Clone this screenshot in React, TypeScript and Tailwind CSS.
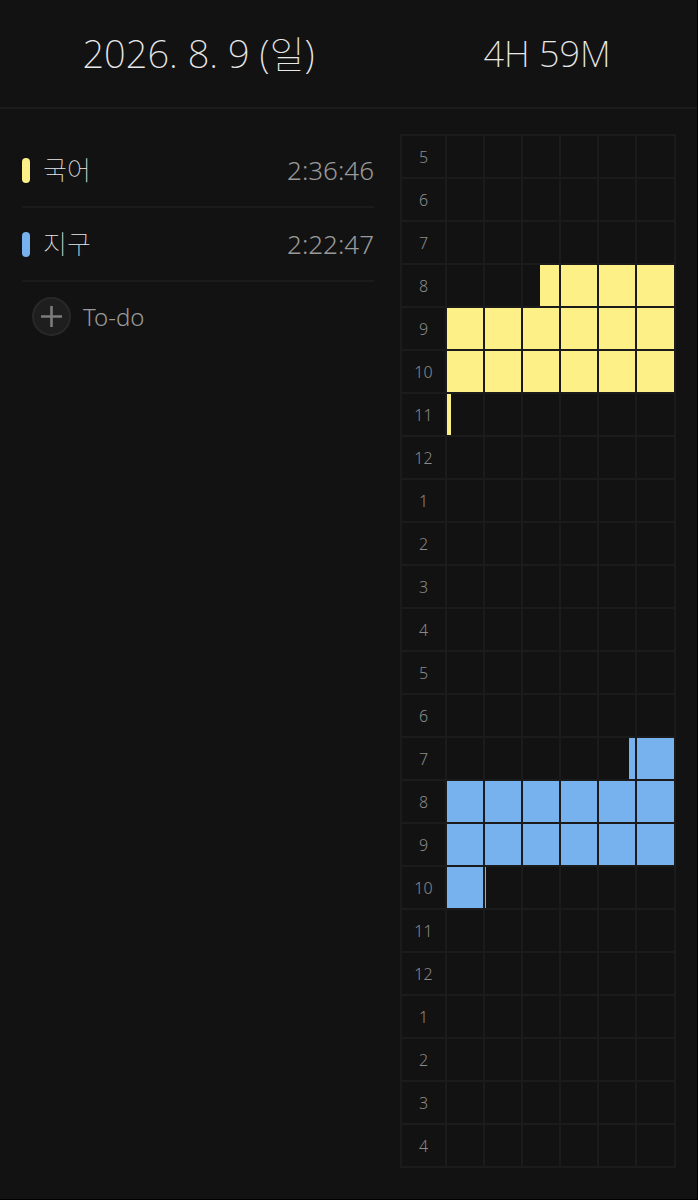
import React from "react";

type Subject = {
    name: string;
    time: string;
    color: string;
    // Minutes counted from the top of the grid (5:00)
    start: number;
    end: number;
};

const subjects: Subject[] = [
    {
        name: "국어",
        time: "2:36:46",
        color: "bg-[#fdf087]",
        start: 3 * 60 + 24.6,
        end: 6 * 60 + 1.1
    },
    {
        name: "지구",
        time: "2:22:47",
        color: "bg-[#78b2ee]",
        start: 14 * 60 + 48.4,
        end: 17 * 60 + 10.4
    }
];

const hours = Array.from({ length: 24 }, (_x, i) => ((i + 4) % 12) + 1);
const tens = [0, 10, 20, 30, 40, 50];

const Cell = ({ from }: { from: number }) => {
    const subject = subjects.find((s) => s.start < from + 10 && s.end > from);
    if (!subject) return <td className="bg-[#121212] p-0" />;

    const start = Math.max(subject.start, from) - from;
    const end = Math.min(subject.end, from + 10) - from;

    return (
        <td className="bg-[#121212] p-0">
            <div
                className={`h-[41px] ${subject.color}`}
                style={{
                    marginLeft: `${start * 10}%`,
                    width: `${(end - start) * 10}%`
                }}
            />
        </td>
    );
};

const TimeTable = () => (
    <table
        className="w-[276px] shrink-0 table-fixed border-separate border-spacing-[2px] bg-[#1b1b1b]"
        aria-label="Time table"
    >
        <colgroup>
            <col className="w-[43px]" />
            <col className="w-[36px]" />
            <col className="w-[36px]" />
            <col className="w-[36px]" />
            <col className="w-[36px]" />
            <col className="w-[36px]" />
            <col />
        </colgroup>
        <tbody>
            {hours.map((hour, row) => (
                <tr key={row} className="h-[41px]">
                    <th
                        scope="row"
                        className="bg-[#121212] p-0 text-center text-base font-light text-[#8a8a8a]"
                    >
                        {hour}
                    </th>
                    {tens.map((t) => (
                        <Cell key={t} from={row * 60 + t} />
                    ))}
                </tr>
            ))}
        </tbody>
    </table>
);

export default function App() {
    return (
        <div className="min-h-screen border-r border-b border-black bg-[#121212] font-['Noto_Sans','Noto_Sans_CJK_KR',sans-serif] text-[#e8e8e8] antialiased">
            <header className="flex h-[109px] items-center border-b-2 border-[#1b1b1b] font-extralight">
                <h1 className="flex-1 text-center text-[38px]">
                    2026. 8. 9 (<span className="font-thin">일</span>)
                </h1>
                <p className="w-[300px] text-center text-[36px]">4H 59M</p>
            </header>
            <main className="flex items-start gap-[26px] pt-[25px] pr-[21px] pb-[31px] pl-[22px]">
                <section className="flex-1" aria-label="Subjects">
                    <ul>
                        {subjects.map((s) => (
                            <li
                                key={s.name}
                                className="flex h-[74px] items-center border-b-2 border-[#1b1b1b] text-[26px]"
                            >
                                <span
                                    className={`mr-[13px] h-[25px] w-2 rounded-full ${s.color}`}
                                />
                                <span className="flex-1 font-thin">
                                    {s.name}
                                </span>
                                <span className="font-light text-[#9a9a9a]">
                                    {s.time}
                                </span>
                            </li>
                        ))}
                    </ul>
                    <button
                        type="button"
                        className="mt-[15px] ml-[10px] flex items-center gap-3 text-2xl font-light text-[#9a9a9a]"
                    >
                        <span className="flex size-[39px] items-center justify-center rounded-full border-2 border-[#282828] bg-[#1e1e1e]">
                            <svg
                                className="size-[21px]"
                                viewBox="0 0 21 21"
                                stroke="#7c7c7c"
                                strokeWidth="2.6"
                            >
                                <path d="M10.5 0v21M0 10.5h21" />
                            </svg>
                        </span>
                        To-do
                    </button>
                </section>
                <TimeTable />
            </main>
        </div>
    );
}
